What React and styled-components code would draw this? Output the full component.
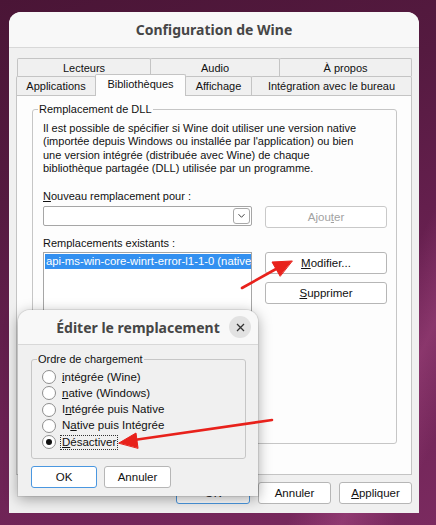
import React from 'react';
import styled, { createGlobalStyle } from 'styled-components';

const GlobalStyle = createGlobalStyle`
  html, body { margin: 0; padding: 0; }
  body {
    width: 436px;
    height: 525px;
    overflow: hidden;
    font-family: "Liberation Sans", Arial, sans-serif;
    font-size: 11px;
    color: #111;
  }
  * { box-sizing: border-box; }
`;

const Desktop = styled.div`
  position: relative;
  width: 436px;
  height: 525px;
  padding: 12px 17px 0 9px;
  background:
    linear-gradient(115deg, transparent 78%, rgba(190, 90, 150, 0.35) 86%, transparent 94%),
    linear-gradient(160deg, #4a1536 0%, #551a40 30%, #6a2152 62%, #7a2a5f 100%);
`;

const Window = styled.div`
  width: 410px;
  height: 501px;
  background: #f0f0f0;
  border-radius: 12px 12px 0 0;
  display: flex;
  flex-direction: column;
  overflow: hidden;
`;

const TitleBar = styled.div`
  flex: none;
  height: ${p => p.$h || 36}px;
  display: grid;
  grid-template-columns: 1fr auto 1fr;
  align-items: center;
  background: #f8f8f8;
  border-bottom: 1px solid #d8d8d8;
`;

const Title = styled.div`
  grid-column: 2;
  font-family: "Noto Sans", "DejaVu Sans", sans-serif;
  font-weight: 700;
  font-size: 14px;
  color: #464646;
`;

const CloseButton = styled.div`
  grid-column: 3;
  justify-self: end;
  margin-right: 7px;
  width: 22px;
  height: 22px;
  border-radius: 50%;
  background: #e2e2e2;
  display: flex;
  align-items: center;
  justify-content: center;
`;

const Body = styled.div`
  flex: 1;
  padding: 10px 7px 0 7px;
  display: flex;
  flex-direction: column;
`;

const TabRow = styled.div`
  display: flex;
  height: ${p => p.$h}px;
  padding-left: ${p => p.$indent || 0}px;
  align-items: flex-end;
`;

const Tab = styled.div`
  width: ${p => p.$w}px;
  height: ${p => (p.$active ? p.$h + 3 : p.$h)}px;
  margin-left: -1px;
  margin-bottom: ${p => (p.$active ? -1 : 0)}px;
  position: relative;
  z-index: ${p => (p.$active ? 2 : 1)};
  background: ${p => (p.$active ? '#fdfdfd' : '#f0f0f0')};
  border: 1px solid #c4c4c4;
  border-bottom: none;
  border-radius: 2px 2px 0 0;
  display: flex;
  align-items: center;
  justify-content: center;
  padding-bottom: ${p => (p.$active ? 3 : 0)}px;
  &:first-child { margin-left: 0; }
`;

const Panel = styled.div`
  width: 396px;
  height: 380px;
  background: #fdfdfd;
  border: 1px solid #c4c4c4;
  padding: 6px 14px 0 15px;
`;

const Group = styled.fieldset`
  margin: 0;
  width: ${p => p.$w}px;
  height: ${p => p.$h}px;
  border: 1px solid #c6c6c6;
  border-radius: 3px;
  padding: 0 9px 0 10px;
`;

const Legend = styled.legend`
  padding: 0 1px;
  margin-left: -5px;
  line-height: 14px;
  font-size: 11px;
`;

const Description = styled.p`
  margin: 6px 0 0 0;
  line-height: 13.4px;
`;

const Label = styled.div`
  margin-top: ${p => p.$mt}px;
  line-height: 13.4px;
`;

const FormGrid = styled.div`
  display: grid;
  grid-template-columns: 209px 122px;
  column-gap: 13px;
  margin-top: ${p => p.$mt}px;
  align-items: start;
`;

const Combo = styled.div`
  height: 20px;
  background: #fff;
  border: 1px solid #a6a6a6;
  border-radius: 2px;
  display: flex;
  justify-content: flex-end;
  align-items: center;
  padding-right: 1px;
`;

const ComboButton = styled.div`
  width: 17px;
  height: 16px;
  border: 1px solid #a8a8a8;
  border-radius: 3px;
  display: flex;
  align-items: center;
  justify-content: center;
`;

const Button = styled.div`
  width: ${p => (p.$w ? `${p.$w}px` : 'auto')};
  height: 22px;
  background: #fff;
  border: 1px solid ${p => (p.$default ? '#4a97e0' : p.$disabled ? '#c9c9c9' : '#b6b6b6')};
  border-radius: 3px;
  display: flex;
  align-items: center;
  justify-content: center;
  color: ${p => (p.$disabled ? '#a2a2a2' : '#111')};
  font-size: 11.5px;
`;

const ButtonColumn = styled.div`
  display: flex;
  flex-direction: column;
  gap: 8px;
`;

const ListBox = styled.div`
  height: 180px;
  background: #fff;
  border: 1px solid #a6a6a6;
  padding: 1px 0 0 1px;
  overflow: hidden;
`;

const ListItem = styled.div`
  height: 15px;
  line-height: 15px;
  padding-left: 1px;
  white-space: nowrap;
  background: ${p => (p.$selected ? '#3390f0' : 'transparent')};
  color: ${p => (p.$selected ? '#fff' : '#111')};
  font-size: 11.3px;
`;

const Footer = styled.div`
  display: flex;
  justify-content: flex-end;
  gap: 8px;
  margin-top: 7px;
`;

const Dialog = styled.div`
  position: absolute;
  left: 18px;
  top: 310px;
  width: 240px;
  height: 186px;
  background: #f0f0f0;
  border-radius: 12px 12px 0 0;
  box-shadow: 0 3px 14px rgba(0, 0, 0, 0.35), 0 0 0 1px rgba(0, 0, 0, 0.08);
  display: flex;
  flex-direction: column;
  overflow: hidden;
  z-index: 5;
`;

const DialogBody = styled.div`
  padding: 7px 12px 0 13px;
`;

const RadioList = styled.div`
  padding-top: 3px;
  display: flex;
  flex-direction: column;
`;

const RadioRow = styled.div`
  height: 16.25px;
  display: flex;
  align-items: center;
  gap: 4px;
`;

const RadioCircle = styled.span`
  width: 14px;
  height: 14px;
  border-radius: 50%;
  border: 1px solid #8e8e8e;
  background: #fff;
  display: flex;
  align-items: center;
  justify-content: center;
  &::after {
    content: '';
    display: ${p => (p.$checked ? 'block' : 'none')};
    width: 6px;
    height: 6px;
    border-radius: 50%;
    background: #111;
  }
`;

const RadioText = styled.span`
  font-size: 11.5px;
  line-height: 13px;
  padding: 0 1px;
  border: 1px dotted ${p => (p.$focus ? '#333' : 'transparent')};
`;

const DialogFooter = styled.div`
  display: flex;
  gap: 7px;
  margin-top: 7px;
`;

const Arrows = styled.svg`
  position: absolute;
  left: 0;
  top: 0;
  pointer-events: none;
  z-index: 10;
`;

const tabsBack = [
  { label: 'Lecteurs', w: 134 },
  { label: 'Audio', w: 130 },
  { label: 'À propos', w: 133 },
];

const tabsFront = [
  { label: 'Applications', w: 80 },
  { label: 'Bibliothèques', w: 91, active: true },
  { label: 'Affichage', w: 67 },
  { label: 'Intégration avec le bureau', w: 161 },
];

const radios = [
  { pre: '', key: 'i', post: 'ntégrée (Wine)' },
  { pre: '', key: 'n', post: 'ative (Windows)' },
  { pre: 'I', key: 'n', post: 'tégrée puis Native' },
  { pre: 'N', key: 'a', post: 'tive puis Intégrée' },
  { pre: '', key: 'D', post: 'ésactiver', checked: true },
];

const Chevron = () => (
  <svg width="9" height="6" viewBox="0 0 9 6">
    <path d="M1.5 1.2 L4.5 4.3 L7.5 1.2" fill="none" stroke="#444" strokeWidth="1" />
  </svg>
);

const Cross = () => (
  <svg width="9" height="9" viewBox="0 0 9 9">
    <path d="M1 1 L8 8 M8 1 L1 8" stroke="#333" strokeWidth="1.3" />
  </svg>
);

export default function App() {
  return (
    <>
      <GlobalStyle />
      <Desktop>
        <Window>
          <TitleBar>
            <Title>Configuration de Wine</Title>
          </TitleBar>
          <Body>
            <TabRow $h={18} $indent={1}>
              {tabsBack.map(t => (
                <Tab key={t.label} $w={t.w} $h={18}>{t.label}</Tab>
              ))}
            </TabRow>
            <TabRow $h={19}>
              {tabsFront.map(t => (
                <Tab key={t.label} $w={t.w} $h={19} $active={t.active}>{t.label}</Tab>
              ))}
            </TabRow>
            <Panel>
              <Group $w={365} $h={342}>
                <Legend>Remplacement de DLL</Legend>
                <Description>
                  Il est possible de spécifier si Wine doit utiliser une version native
                  <br />(importée depuis Windows ou installée par l'application) ou bien
                  <br />une version intégrée (distribuée avec Wine) de chaque
                  <br />bibliothèque partagée (DLL) utilisée par un programme.
                </Description>
                <Label $mt={14}><u>N</u>ouveau remplacement pour :</Label>
                <FormGrid $mt={3}>
                  <Combo>
                    <ComboButton><Chevron /></ComboButton>
                  </Combo>
                  <Button $disabled>Ajou<u>t</u>er</Button>
                </FormGrid>
                <Label $mt={9}>Remplacements existants :</Label>
                <FormGrid $mt={2}>
                  <ListBox>
                    <ListItem $selected>api-ms-win-core-winrt-error-l1-1-0 (native</ListItem>
                  </ListBox>
                  <ButtonColumn>
                    <Button><u>M</u>odifier...</Button>
                    <Button><u>S</u>upprimer</Button>
                  </ButtonColumn>
                </FormGrid>
              </Group>
            </Panel>
            <Footer>
              <Button $w={74} $default>OK</Button>
              <Button $w={73}>Annuler</Button>
              <Button $w={73}><u>A</u>ppliquer</Button>
            </Footer>
          </Body>
        </Window>

        <Dialog>
          <TitleBar $h={35}>
            <Title>Éditer le remplacement</Title>
            <CloseButton><Cross /></CloseButton>
          </TitleBar>
          <DialogBody>
            <Group $w={215} $h={107}>
              <Legend>Ordre de chargement</Legend>
              <RadioList>
                {radios.map((r, i) => (
                  <RadioRow key={i}>
                    <RadioCircle $checked={r.checked} />
                    <RadioText $focus={r.checked}>
                      {r.pre}<u>{r.key}</u>{r.post}
                    </RadioText>
                  </RadioRow>
                ))}
              </RadioList>
            </Group>
            <DialogFooter>
              <Button $w={66} $default>OK</Button>
              <Button $w={67}>Annuler</Button>
            </DialogFooter>
          </DialogBody>
        </Dialog>

        <Arrows width="436" height="525" viewBox="0 0 436 525">
          <g fill="#e8211b" stroke="#e8211b" strokeLinecap="round">
            <line x1="242" y1="288" x2="276" y2="269" strokeWidth="2.6" />
            <polygon points="292,261 272,262 280,276" strokeWidth="1" />
            <line x1="272" y1="420" x2="134" y2="440" strokeWidth="2.6" />
            <polygon points="119,443 136,433 138,448" strokeWidth="1" />
          </g>
        </Arrows>
      </Desktop>
    </>
  );
}
